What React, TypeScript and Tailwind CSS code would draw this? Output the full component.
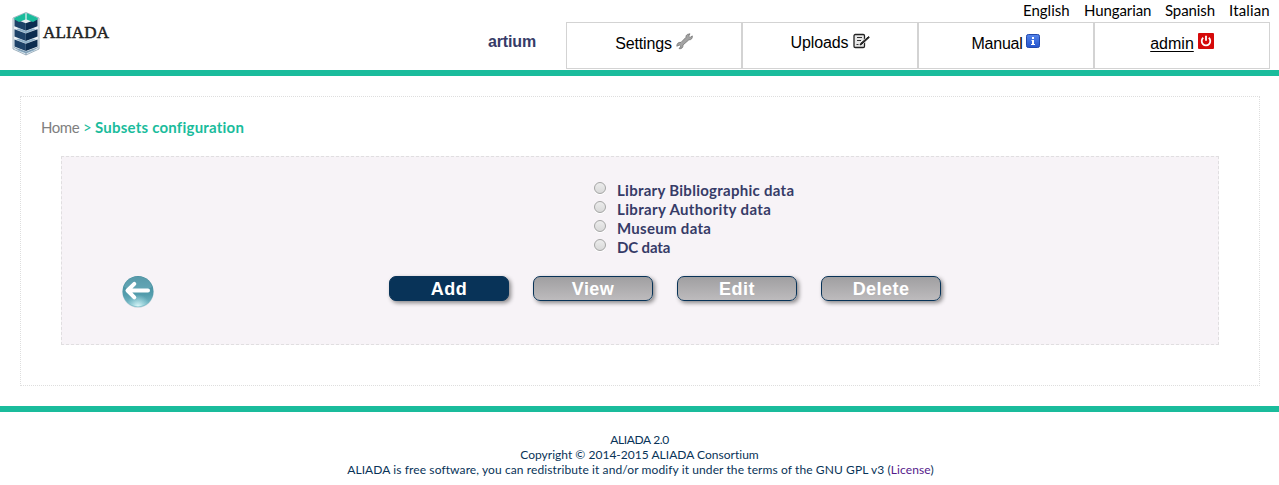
import React from 'react';

const languages = [
  { name: 'English', cls: 'w-[47px] tracking-[0px]' },
  { name: 'Hungarian', cls: 'w-[67px] tracking-[-0.1px]' },
  { name: 'Spanish', cls: 'w-[50px] tracking-[-0.1px]' },
  { name: 'Italian', cls: 'w-[41px] tracking-[0.15px]' },
];

const subsets = [
  { name: 'Library Bibliographic data', cls: 'tracking-[0.28px]' },
  { name: 'Library Authority data', cls: 'tracking-[0.36px]' },
  { name: 'Museum data', cls: 'tracking-[0.3px]' },
  { name: 'DC data', cls: 'tracking-[-0.15px]' },
];

function Logo() {
  return (
    <svg width="28" height="44" viewBox="0 0 28 44" className="shrink-0">
      <path d="M14 .5 27 6v31L14 43 1 37V6Z" fill="#e9eef2" stroke="#8ea3b3" strokeWidth=".8" />
      {[0, 10.2, 20.4].map((y) => (
        <g key={y} transform={`translate(0 ${y})`}>
          <path d="M2.5 7 13.8 11.3v7.4L2.5 14.2Z" fill="#1d4268" />
          <path d="M25.5 7 13.8 11.3v7.4l11.7-4.5Z" fill="#0c2d50" />
          <path d="m2.5 15.2 11.5 4.6 11.5-4.6v1.3L14 21 2.5 16.5Z" fill="#e9f1f6" />
          <path d="m7 16.5 7 2.6 7-2.6 3 .8-10 3.9-10-3.9Z" fill="#8db1ca" />
        </g>
      ))}
      <path d="M13.4 1v6.6L7 10 2.2 7.2V6Z" fill="#1abc9c" />
      <path d="M14.6 1v6.6L21 10l4.8-2.8V6Z" fill="#1abc9c" />
      <path d="M14 40.5V43M2 35.5l12 4.8 12-4.8" fill="none" stroke="#7893a7" strokeWidth=".8" />
    </svg>
  );
}

function WrenchIcon() {
  return (
    <svg width="17" height="17" viewBox="0 0 17 17">
      <path
        d="M11.3 1.5 14 .8 12.7 3.2l1.4 1.2 2.2-1.5c.3 2.2-.8 4.1-3.4 3.9L7 12c.2 2.6-1.4 4-3.9 3.7l1.6-2.4-1.3-1.2-2.6 1.1C.8 10.8 2.2 9 5 9.4l5-5.1c-.1-1.2.3-2.2 1.3-2.8Z"
        fill="#a3a3a3"
        stroke="#747474"
        strokeWidth=".8"
      />
    </svg>
  );
}

function NoteIcon() {
  return (
    <svg width="17" height="16" viewBox="0 0 17 16">
      <rect x="1" y="1.5" width="10.5" height="13" rx="1.3" fill="#e8e8e8" stroke="#222" strokeWidth="1.3" />
      <path d="M4 4.5h5M4 7.5h4M3.5 11.5h2" stroke="#333" strokeWidth="1" />
      <path d="m9 10 7-5.8" stroke="#fff" strokeWidth="3" />
      <path d="m7 12 .9-1.8L15.6 3.6l.7.8-7.5 6.8Z" fill="#333" stroke="#111" strokeWidth=".9" />
    </svg>
  );
}

function InfoIcon() {
  return (
    <svg width="14" height="14" viewBox="0 0 14 14">
      <defs>
        <linearGradient id="info" x2="0" y2="1">
          <stop stopColor="#5585ea" />
          <stop offset="1" stopColor="#2454ce" />
        </linearGradient>
      </defs>
      <rect x=".5" y=".5" width="13" height="13" rx="1.8" fill="url(#info)" stroke="#2349ac" />
      <path d="M6 3h2v2H6zM5.5 6H8v4h1v1H5v-1h1V7h-.5z" fill="#fff" />
    </svg>
  );
}

function PowerIcon() {
  return (
    <svg width="16" height="16" viewBox="0 0 16 16">
      <rect width="16" height="16" rx="1" fill="#d50a0a" />
      <path d="M5.2 4.8a4.3 4.3 0 1 0 5.6 0M8 2.8v5" fill="none" stroke="#fff" strokeWidth="1.8" />
    </svg>
  );
}

function BackIcon() {
  return (
    <svg width="34" height="34" viewBox="0 0 34 34">
      <defs>
        <linearGradient id="ball" x2="0" y2="1">
          <stop stopColor="#3d8798" />
          <stop offset=".6" stopColor="#549dad" />
          <stop offset="1" stopColor="#7fc0cc" />
        </linearGradient>
        <radialGradient id="glow" cx=".5" cy="1" r=".4">
          <stop stopColor="#e8ffff" stopOpacity=".9" />
          <stop offset="1" stopColor="#b4e8ef" stopOpacity="0" />
        </radialGradient>
      </defs>
      <ellipse cx="17" cy="17.5" rx="15.5" ry="15.3" fill="#c6d5dc" />
      <circle cx="17" cy="16.5" r="15.5" fill="url(#ball)" />
      <circle cx="17" cy="16.5" r="15" fill="url(#glow)" />
      <path d="M3 12C5 4 12 1.5 17 1.5S29 4 31 12c-7 4-17 5-28 0Z" fill="#a8d5de" opacity=".25" />
      <path d="M27 15.5H7M13.3 8.8 6.5 15.5l6.8 6.8" fill="none" stroke="#fff" strokeWidth="4" strokeLinecap="round" strokeLinejoin="round" />
    </svg>
  );
}

function Tab({ label, icon, cls = '', textCls = '' }: { label: string; icon: React.ReactNode; cls?: string; textCls?: string }) {
  return (
    <a className="flex h-[47px] w-44 justify-center gap-1 border border-[#d3d3d3] pt-[11px] text-base leading-[18px] text-black">
      <span className={textCls}>{label}</span>
      <span className={cls}>{icon}</span>
    </a>
  );
}

function Action({ label, primary = false }: { label: string; primary?: boolean }) {
  return (
    <button
      className={
        'h-[25px] w-[120px] rounded-[7px] border border-[#083358] pt-px text-lg leading-[22px] font-bold tracking-[0.45px] text-white shadow-[2px_2px_4px_rgba(0,0,0,0.45)] ' +
        (primary ? 'bg-[#083358]' : 'bg-linear-to-b from-[#a09fa1] to-[#bdbbbd]')
      }
    >
      {label}
    </button>
  );
}

export default function App() {
  return (
    <div className="h-[485px] w-full overflow-hidden bg-white font-['Liberation_Sans',sans-serif] [font-variant-ligatures:none]">
      <header className="flex h-[76px] justify-between border-b-6 border-[#1abc9c]">
        <div className="flex gap-[3px] pt-3 pl-3">
          <Logo />
          <span className="pt-[9px] font-['Liberation_Serif',serif] text-[17px] leading-6 tracking-[0.15px] text-[#222] [-webkit-text-stroke:0.5px_#222]">
            ALIADA
          </span>
        </div>
        <div className="flex pr-[9px]">
          <span className="w-[78px] pt-[33px] text-base leading-[18px] font-bold tracking-[-0.15px] text-[#363b67]">artium</span>
          <div className="w-[704px]">
            <nav className="flex h-[22px] justify-end gap-3.5 font-['Lato',sans-serif] text-[15px] leading-5 text-black">
              {languages.map((l) => (
                <a key={l.name} className={'whitespace-nowrap ' + l.cls}>
                  {l.name}
                </a>
              ))}
            </nav>
            <div className="flex">
              <Tab label="Settings" icon={<WrenchIcon />} cls="-mt-px" textCls="mt-px tracking-[-0.15px]" />
              <Tab label="Uploads" icon={<NoteIcon />} cls="-mt-px" textCls="tracking-[-0.1px]" />
              <Tab label="Manual" icon={<InfoIcon />} textCls="mt-px tracking-[-0.25px]" />
              <Tab label="admin" icon={<PowerIcon />} cls="-mt-px" textCls="mt-px underline underline-offset-2" />
            </div>
          </div>
        </div>
      </header>

      <main className="mx-5 mt-5 mr-[19px] h-[290px] border border-dotted border-[#dedede] px-5 pt-5 font-['Lato',sans-serif]">
        <div className="flex h-[39px] gap-1 text-[15px] leading-5 whitespace-nowrap">
          <span className="w-[38px] tracking-[-0.45px] text-[#808080]">Home</span>
          <span className="w-2 text-[#1abc9c]">&gt;</span>
          <b className="tracking-[0.22px] text-[#1abc9c]">Subsets configuration</b>
        </div>
        <section className="mx-5 h-[189px] border border-dashed border-[#e0dee0] bg-[#f7f3f7] pt-6">
          <div className="ml-[532px] flex flex-col">
            {subsets.map((s) => (
              <label key={s.name} className="flex h-[19px] gap-[11px] text-[15px] leading-[18px] font-bold whitespace-nowrap text-[#363b67]">
                <span className="mt-px size-3 shrink-0 rounded-full border border-[#a5a5a5] bg-linear-to-b from-[#ececec] to-[#d9d9d9] shadow-[0_1px_0_#ffffff]" />
                <span className={s.cls}>{s.name}</span>
              </label>
            ))}
          </div>
          <div className="mt-[19px] flex">
            <a className="-mt-px ml-[59px] h-[34px] w-[268px]">
              <BackIcon />
            </a>
            <div className="flex gap-6 font-['Liberation_Sans',sans-serif]">
              <Action label="Add" primary />
              <Action label="View" />
              <Action label="Edit" />
              <Action label="Delete" />
            </div>
          </div>
        </section>
      </main>

      <footer className="mt-5 flex flex-col items-center border-t-6 border-[#1abc9c] pt-5 font-['Lato',sans-serif] text-xs leading-[15px] whitespace-nowrap text-[#083358]">
        <p className="tracking-[-0.35px]">ALIADA 2.0</p>
        <p className="tracking-[0.02px]">Copyright © 2014-2015 ALIADA Consortium</p>
        <p className="pl-0.5 tracking-[0.1px]">
          ALIADA is free software, you can redistribute it and/or modify it under the terms of the GNU GPL v3 (
          <a className="text-[#551a8b]">License</a>)
        </p>
      </footer>
    </div>
  );
}
